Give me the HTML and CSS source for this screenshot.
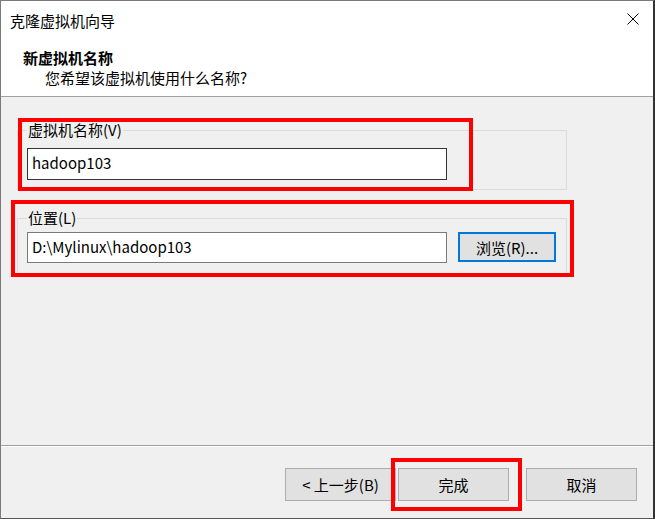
FILE: index.html
```html
<!DOCTYPE html>
<html lang="zh-CN">
<head>
<meta charset="utf-8">
<title>克隆虚拟机向导</title>
<link rel="stylesheet" href="styles.css">
</head>
<body>
<div class="window">
  <div class="header">
    <div class="titlebar">
      <span class="title">克隆虚拟机向导</span>
      <svg class="close" width="12" height="12" viewBox="0 0 12 12"><path d="M0.5 0.5 L11.5 11.5 M11.5 0.5 L0.5 11.5" stroke="#000" stroke-width="1" fill="none"/></svg>
    </div>
    <div class="heading">新虚拟机名称</div>
    <div class="subheading">您希望该虚拟机使用什么名称?</div>
  </div>
  <div class="body">
    <fieldset class="group group-name">
      <legend>虚拟机名称(V)</legend>
      <div class="row">
        <div class="input input-focus">hadoop103</div>
      </div>
    </fieldset>
    <fieldset class="group group-loc">
      <legend>位置(L)</legend>
      <div class="row">
        <div class="input">D:\Mylinux\hadoop103</div>
        <div class="btn btn-browse">浏览(R)...</div>
      </div>
    </fieldset>
  </div>
  <div class="footer">
    <div class="btn btn-foot btn-back">&lt; 上一步(B)</div>
    <div class="btn btn-foot btn-finish">完成</div>
    <div class="btn btn-foot btn-cancel">取消</div>
  </div>
  <div class="mark mark-name"></div>
  <div class="mark mark-loc"></div>
  <div class="mark mark-finish"></div>
</div>
</body>
</html>
```
FILE: styles.css
```css
html, body {
  margin: 0;
  padding: 0;
  background: #ffffff;
}
body {
  font-family: "Noto Sans CJK SC", "Noto Sans", sans-serif;
  font-size: 15px;
  color: #000;
}
.window {
  position: relative;
  box-sizing: border-box;
  width: 655px;
  height: 519px;
  border-left: 1px solid #7a7a7a;
  border-top: 1px solid #7a7a7a;
  border-right: 2px solid #333333;
  border-bottom: 1px solid #555555;
  display: flex;
  flex-direction: column;
  background: #f0f0f0;
  overflow: hidden;
}
.header {
  background: #ffffff;
  height: 95px;
  border-bottom: 1px solid #a0a0a0;
  flex: none;
}
.titlebar {
  height: 40px;
  display: flex;
  justify-content: space-between;
  align-items: center;
  padding-left: 9px;
}
.title {
  line-height: 20px;
}
.close {
  align-self: flex-start;
  margin-top: 12px;
  margin-right: 14px;
}
.heading {
  margin-top: 7px;
  padding-left: 22px;
  font-weight: bold;
  line-height: 20px;
}
.subheading {
  padding-left: 44px;
  line-height: 20px;
}
.body {
  height: 349px;
  flex: none;
  box-sizing: border-box;
  padding-top: 23px;
  padding-left: 16px;
  border-bottom: 1px solid #a0a0a0;
}
.group {
  margin: 0;
  width: 550px;
  box-sizing: border-box;
  border: 1px solid #dcdcdc;
  padding: 0 8px 9px 9px;
  min-width: 0;
}
.group legend {
  padding: 0 1px;
  line-height: 20px;
  height: 20px;
}
.group-name .row {
  margin-top: 8px;
}
.group-loc {
  margin-top: 18px;
  padding-bottom: 12px;
}
.group-loc .row {
  margin-top: 4px;
}
.row {
  display: flex;
  align-items: flex-start;
  gap: 11px;
}
.input {
  box-sizing: border-box;
  width: 420px;
  height: 31px;
  background: #ffffff;
  border: 1px solid #7a7a7a;
  padding-left: 4px;
  line-height: 28px;
  white-space: nowrap;
}
.input-focus {
  height: 32px;
  border-color: #333333;
  line-height: 28px;
}
.btn {
  box-sizing: border-box;
  background: #e1e1e1;
  border: 1px solid #adadad;
  display: flex;
  align-items: center;
  justify-content: center;
  white-space: nowrap;
}
.btn-browse {
  width: 98px;
  height: 30px;
  border: 2px solid #0078d7;
}
.footer {
  flex: 1;
  border-top: 1px solid #ffffff;
  display: flex;
  justify-content: flex-end;
  align-items: flex-start;
  padding-top: 21px;
  padding-right: 16px;
}
.btn-foot {
  width: 111px;
  height: 33px;
}
.btn-back {
  margin-right: 2px;
}
.btn-finish {
  margin-right: 17px;
}
.mark {
  position: absolute;
  box-sizing: border-box;
  border: 4px solid #ff0000;
}
.mark-name {
  left: 17px;
  top: 117px;
  width: 455px;
  height: 73px;
}
.mark-loc {
  left: 10px;
  top: 199px;
  width: 563px;
  height: 77px;
}
.mark-finish {
  left: 390px;
  top: 457px;
  width: 131px;
  height: 53px;
}
```
